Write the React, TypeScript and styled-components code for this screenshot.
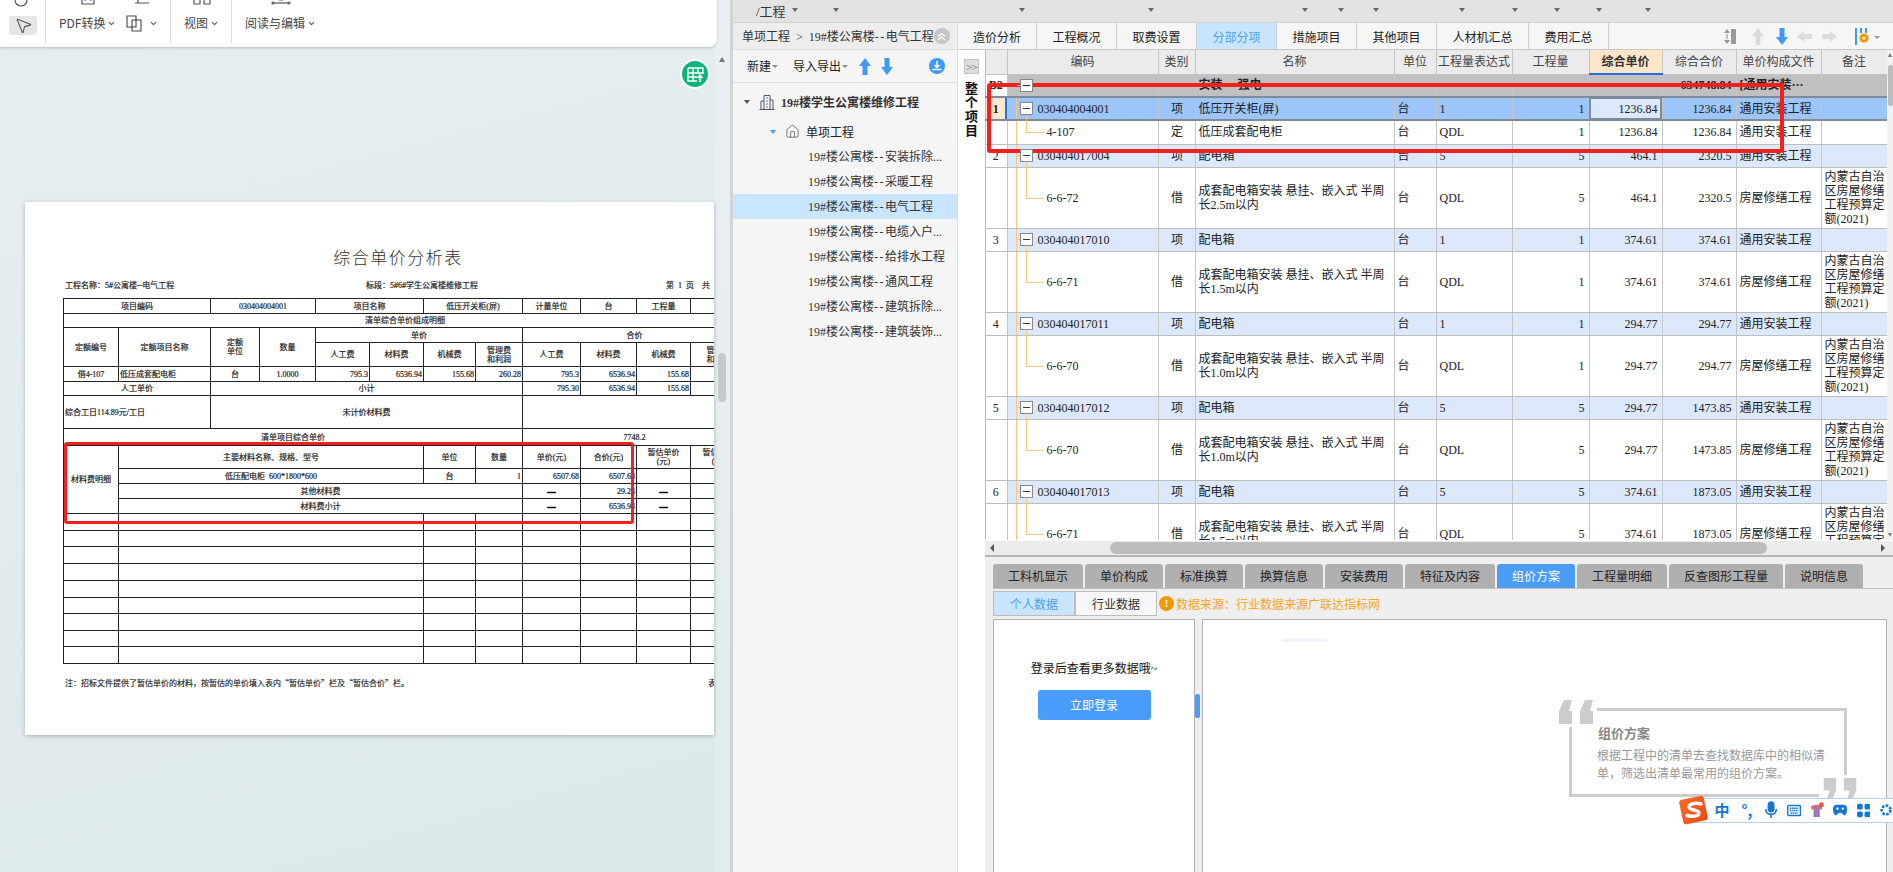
import React from "react";
import styled, { createGlobalStyle } from "styled-components";
import { MousePointer2, ChevronDown, House } from "lucide-react";

const SERIF = `"Liberation Serif", "Noto Sans CJK SC", serif`;
const SANS = `"Noto Sans CJK SC", "Liberation Sans", sans-serif`;

const Global = createGlobalStyle`
  html, body { margin: 0; padding: 0; height: 100%; overflow: hidden; background: #fff; }
  #root { height: 100%; }
  * { box-sizing: border-box; }
`;

const Screen = styled.div`
  display: flex;
  width: 1893px;
  height: 872px;
  overflow: hidden;
  position: relative;
  font-family: ${SERIF};
  font-size: 12px;
  color: #222;
`;

/* ---------- left: pdf viewer ---------- */
const Viewer = styled.section`
  width: 730px;
  flex: none;
  display: flex;
  position: relative;
  background: linear-gradient(165deg, #e7eef2 0%, #e2ebee 50%, #dde9e9 100%);
`;
const ViewerMain = styled.div`
  width: 715px;
  flex: none;
  display: flex;
  flex-direction: column;
`;
const Ribbon = styled.div`
  width: 717px;
  height: 47px;
  flex: none;
  display: flex;
  background: #fff;
  border-radius: 0 0 8px 0;
  box-shadow: 0 1px 3px rgba(0, 0, 0, 0.22);
  font-family: ${SANS};
  color: #444;
  padding-left: 9px;
`;
const RibbonGroup = styled.div<{ $w: number; $pad: number; $end?: boolean }>`
  width: ${(p) => p.$w}px;
  height: 43px;
  flex: none;
  display: flex;
  gap: 10px;
  padding-left: ${(p) => p.$pad}px;
  border-right: ${(p) => (p.$end ? "none" : "1px solid #dcdcdc")};
`;
const RibbonTool = styled.div`
  height: 43px;
  display: flex;
  flex-direction: column;
  justify-content: flex-end;
  align-items: center;
  padding-bottom: 8px;
`;
const TopIcon = styled.svg`
  flex: none;
  width: 20px;
  height: 20px;
  margin-bottom: 6px;
  fill: none;
  stroke: #555;
  stroke-width: 1.2;
`;
const ToolLabel = styled.div`
  height: 24px;
  display: flex;
  align-items: center;
  gap: 2px;
  white-space: nowrap;
  line-height: 24px;
`;
const CursorBtn = styled.div`
  width: 28px;
  height: 24px;
  display: flex;
  align-items: center;
  justify-content: center;
  background: #e6e6e6;
  border-radius: 3px;
  color: #555;
`;
const ViewerBody = styled.div`
  flex: 1;
  padding: 155px 0 0 25px;
`;
const Page = styled.article`
  position: relative;
  width: 689px;
  height: 533px;
  background: #fff;
  overflow: hidden;
  box-shadow: 0 1px 4px rgba(0, 0, 0, 0.25);
  padding: 42px 0 0 38px;
  color: #222;
`;
const PageTitle = styled.h1`
  width: 670px;
  margin: 0;
  text-align: center;
  font-family: ${SANS};
  font-size: 17px;
  line-height: 26px;
  font-weight: 300;
  letter-spacing: 1.5px;
  color: #333;
`;
const PageInfo = styled.div`
  display: grid;
  grid-template-columns: 301px 300px 120px;
  width: 720px;
  margin-top: 10px;
  padding-left: 2px;
  height: 18px;
  font-size: 8px;
  line-height: 12px;
  -webkit-text-stroke: 0.2px #222;
  white-space: nowrap;
`;
const PdfTable = styled.table`
  border-collapse: collapse;
  table-layout: fixed;
  width: 683px;
  font-size: 8px;
  line-height: 9px;
  -webkit-text-stroke: 0.2px #222;
`;
const PdfRow = styled.tr<{ $h: number }>`
  height: ${(p) => p.$h}px;
`;
const PdfCell = styled.td<{ $a?: string }>`
  border: 1px solid #222;
  padding: 0 1px;
  text-align: ${(p) => p.$a ?? "center"};
  overflow: hidden;
  white-space: nowrap;
`;
const PdfBreak = styled(PdfCell)`
  white-space: normal;
`;
const PdfDash = styled.b`
  -webkit-text-stroke: 0.8px #111;
`;
const PageNote = styled.div`
  display: flex;
  justify-content: space-between;
  width: 683px;
  margin-top: 13px;
  padding: 0 18px 0 2px;
  font-family: ${SANS};
  font-size: 8px;
  line-height: 12px;
  -webkit-text-stroke: 0.15px #222;
  white-space: nowrap;
`;
const PageMark = styled.div`
  position: absolute;
  left: 39px;
  top: 240px;
  width: 570px;
  height: 82px;
  border: 3px solid #f5201c;
  border-radius: 3px;
  pointer-events: none;
`;
const FloatBadge = styled.div`
  position: absolute;
  left: 680px;
  top: 59px;
  width: 30px;
  height: 30px;
  border-radius: 50%;
  background: #10b47a;
  border: 2px solid #fff;
  display: flex;
  align-items: center;
  justify-content: center;
`;
const ViewerTrack = styled.div`
  width: 15px;
  flex: none;
  padding: 57px 0 0 3px;
  background: rgba(255, 255, 255, 0.18);
`;
const TrackArrow = styled.div`
  width: 0;
  height: 0;
  margin-left: 1px;
  border-left: 3px solid transparent;
  border-right: 3px solid transparent;
  border-bottom: 5px solid #777;
`;
const TrackThumb = styled.div`
  width: 8px;
  height: 49px;
  margin-top: 291px;
  background: #c4c9cb;
  border-radius: 4px;
`;

/* ---------- right: estimating app ---------- */
const AppWindow = styled.section`
  flex: 1;
  min-width: 0;
  display: flex;
  flex-direction: column;
  border-left: 3px solid #d4d4d4;
  background: #fff;
`;
const MenuBar = styled.div`
  height: 23px;
  flex: none;
  display: flex;
  background: #e3e3e3;
  border-bottom: 1px solid #d2d2d2;
`;
const MenuSlot = styled.div<{ $w: number }>`
  width: ${(p) => p.$w}px;
  flex: none;
  height: 22px;
  display: flex;
  align-items: center;
  justify-content: space-between;
  padding-bottom: 2px;
`;
const MenuText = styled.span`
  padding-left: 23px;
  font-size: 13px;
  color: #333;
`;
const MenuCaret = styled.i`
  margin-left: auto;
  margin-right: 3px;
  width: 0;
  height: 0;
  border-left: 3px solid transparent;
  border-right: 3px solid transparent;
  border-top: 4px solid #666;
`;
const AppBody = styled.div`
  flex: 1;
  min-height: 0;
  display: flex;
`;
const SideCol = styled.aside`
  width: 225px;
  flex: none;
  display: flex;
  flex-direction: column;
  background: #f5f5f5;
  border-right: 1px solid #ddd;
`;
const Crumb = styled.div`
  height: 27px;
  flex: none;
  display: flex;
  align-items: center;
  padding-left: 9px;
  gap: 5px;
  background: #ededed;
  color: #333;
  white-space: nowrap;
  border-bottom: 1px solid #e0e0e0;
`;
const CrumbFold = styled.span`
  width: 16px;
  height: 16px;
  flex: none;
  border-radius: 50%;
  background: #c6c6c6;
  color: #fff;
  display: flex;
  align-items: center;
  justify-content: center;
  margin-left: -5px;
`;
const Dash = styled.span`
  letter-spacing: 1.5px;
`;
const SideTools = styled.div`
  height: 33px;
  flex: none;
  display: flex;
  align-items: center;
  padding-left: 14px;
  border-bottom: 1px solid #dedede;
  color: #222;
`;
const SideTool = styled.span<{ $w: number }>`
  width: ${(p) => p.$w}px;
  flex: none;
  display: flex;
  align-items: center;
  gap: 1px;
  white-space: nowrap;
`;
const SmallCaret = styled.i`
  width: 0;
  height: 0;
  border-left: 3px solid transparent;
  border-right: 3px solid transparent;
  border-top: 3px solid #888;
`;
const RoundDown = styled.span`
  width: 16px;
  height: 16px;
  margin-left: 36px;
  border-radius: 50%;
  background: #3d9bf5;
  display: flex;
  align-items: center;
  justify-content: center;
`;
const Tree = styled.div`
  padding-top: 6px;
`;
const TreeHead = styled.div<{ $pad: number; $after: number }>`
  height: 25px;
  display: flex;
  align-items: center;
  padding-left: ${(p) => p.$pad}px;
  margin-bottom: ${(p) => p.$after}px;
  white-space: nowrap;
`;
const TreeCaret = styled.i<{ $c: string; $mr: number }>`
  flex: none;
  width: 0;
  height: 0;
  margin-right: ${(p) => p.$mr}px;
  border-left: 3.5px solid transparent;
  border-right: 3.5px solid transparent;
  border-top: 4px solid ${(p) => p.$c};
`;
const TreeRoot = styled.b`
  font-weight: 700;
  color: #333;
`;
const TreeItem = styled.div<{ $on?: boolean }>`
  height: 25px;
  line-height: 26px;
  padding-left: 75px;
  white-space: nowrap;
  color: #333;
  background: ${(p) => (p.$on ? "#c9e5ff" : "transparent")};
`;
const MainCol = styled.div`
  flex: 1;
  min-width: 0;
  display: flex;
  flex-direction: column;
`;
const TopTabs = styled.nav`
  height: 27px;
  flex: none;
  display: flex;
  background: #f6f6f6;
  border-bottom: 1px solid #c8c8c8;
`;
const TopTab = styled.div<{ $w: number; $on?: boolean }>`
  width: ${(p) => p.$w}px;
  flex: none;
  display: flex;
  align-items: center;
  justify-content: center;
  padding-top: 2px;
  border-right: 1px solid #cfcfcf;
  background: ${(p) => (p.$on ? "#c9e5fd" : "transparent")};
  color: ${(p) => (p.$on ? "#4da2ef" : "#222")};
  white-space: nowrap;
`;
const TabTools = styled.div`
  margin-left: 115px;
  display: flex;
  align-items: center;
`;
const ToolSlot = styled.span<{ $w: number }>`
  width: ${(p) => p.$w}px;
  flex: none;
  display: flex;
  align-items: center;
`;
const MainBody = styled.div`
  flex: 1;
  min-height: 0;
  display: flex;
`;
const Strip = styled.div`
  width: 27px;
  flex: none;
  display: flex;
  flex-direction: column;
  align-items: center;
  padding-top: 9px;
`;
const StripBtn = styled.div`
  width: 15px;
  height: 15px;
  background: #dedede;
  border: 1px solid #c4c4c4;
  color: #666;
  display: flex;
  align-items: center;
  justify-content: center;
  font-size: 11px;
  letter-spacing: -1px;
  line-height: 12px;
`;
const StripText = styled.div`
  margin-top: 7px;
  width: 14px;
  font-size: 13px;
  line-height: 14px;
  font-weight: 700;
  font-family: ${SANS};
  color: #111;
  text-align: center;
`;
const Content = styled.div`
  flex: 1;
  min-width: 0;
  display: flex;
  flex-direction: column;
`;
const GridFrame = styled.div`
  height: 490px;
  flex: none;
  display: flex;
  position: relative;
`;
const GridClip = styled.div`
  width: 902px;
  height: 490px;
  flex: none;
  overflow: hidden;
`;
const Sheet = styled.table`
  border-collapse: collapse;
  table-layout: fixed;
  width: 902px;
  line-height: 14px;
  & tr > :first-child {
    box-shadow: inset 1px 0 0 #bbb;
  }
`;
const SheetHeadRow = styled.tr`
  height: 24px;
  background: #ebebeb;
`;
const SheetHead = styled.th<{ $on?: boolean }>`
  padding: 0;
  font-weight: ${(p) => (p.$on ? 700 : 400)};
  color: ${(p) => (p.$on ? "#333" : "#444")};
  background: ${(p) => (p.$on ? "#fde5c8" : "transparent")};
  border-right: 1px solid #c4c4c4;
  border-bottom: ${(p) => (p.$on ? "2px solid #1f6fe0" : "1px solid #c4c4c4")};
  white-space: nowrap;
`;
type Tone = "group" | "picked" | "parent" | "child";
const rowBg: Record<Tone, string> = {
  group: "#c0c0c0",
  picked: "#9cc6fb",
  parent: "#dce9fc",
  child: "#fff",
};
const SheetRow = styled.tr<{ $tone: Tone; $h: number }>`
  height: ${(p) => p.$h}px;
  background: ${(p) => rowBg[p.$tone]};
  font-weight: ${(p) => (p.$tone === "group" ? 700 : 400)};
  & > td {
    border-top: ${(p) => (p.$tone === "picked" ? "2px solid #808b99" : "1px solid #bdbdbd")};
    border-bottom: ${(p) => (p.$tone === "picked" ? "2px solid #808b99" : "1px solid #bdbdbd")};
  }
`;
const Cell = styled.td<{ $a?: string; $pick?: boolean }>`
  padding: ${(p) => (p.$a === "right" ? "0 4px 0 0" : "0 2px 0 3px")};
  text-align: ${(p) => p.$a ?? "left"};
  border-right: 1px solid #c6c6c6;
  background: ${(p) => (p.$pick ? "#dce9fc" : "transparent")};
  outline: ${(p) => (p.$pick ? "2px solid #808b99" : "none")};
  outline-offset: -2px;
  overflow: hidden;
`;
const NumCell = styled.td<{ $picked?: boolean }>`
  padding: 0;
  text-align: center;
  border-right: 1px solid #c6c6c6;
  background: ${(p) => (p.$picked ? "#fde8cf" : "#fff")};
  font-weight: ${(p) => (p.$picked ? 700 : "inherit")};
  tr > &:first-child {
    box-shadow: ${(p) => (p.$picked ? "inset 1px 0 0 #bbb, inset -2px 0 0 #1f6fe0" : "inset 1px 0 0 #bbb")};
  }
`;
const CodeCell = styled.td<{ $line?: boolean; $child?: boolean }>`
  position: relative;
  padding: 0;
  border-right: 1px solid #c6c6c6;
  white-space: nowrap;
  &::before {
    content: "";
    display: ${(p) => (p.$line ? "block" : "none")};
    position: absolute;
    left: 8px;
    top: 0;
    bottom: 0;
    width: 1px;
    background: #fbc77a;
  }
  &::after {
    content: "";
    display: ${(p) => (p.$child ? "block" : "none")};
    position: absolute;
    left: 18px;
    top: -5px;
    width: 17px;
    height: calc(50% + 5px);
    border-left: 1px solid #fbc77a;
    border-bottom: 1px solid #fbc77a;
  }
`;
const CodeParent = styled.div`
  display: flex;
  align-items: center;
  padding-left: 12px;
  gap: 5px;
`;
const FoldBox = styled.span`
  position: relative;
  z-index: 1;
  width: 13px;
  height: 13px;
  flex: none;
  background: #fff;
  border: 1px solid #888;
  display: flex;
  align-items: center;
  justify-content: center;
  &::after {
    content: "";
    width: 7px;
    height: 1px;
    background: #333;
  }
  &::before {
    content: "";
    position: absolute;
    left: -4px;
    top: 5px;
    width: 3px;
    height: 1px;
    background: #fbc77a;
  }
`;
const CodeChild = styled.div`
  padding-left: 39px;
`;
const Mark = styled.div`
  position: absolute;
  left: 2px;
  top: 33px;
  width: 797px;
  height: 70px;
  border: 4px solid #f5201c;
  border-radius: 3px;
  pointer-events: none;
`;
const VScroll = styled.div`
  width: 6px;
  flex: none;
  background: #f1f1f1;
  padding: 3px 0 3px 1px;
  display: flex;
  flex-direction: column;
`;
const VArrow = styled.i<{ $down?: boolean }>`
  flex: none;
  width: 0;
  height: 0;
  border-left: 2.5px solid transparent;
  border-right: 2.5px solid transparent;
  ${(p) => (p.$down ? "border-top: 4px solid #777; margin-top: auto;" : "border-bottom: 4px solid #777;")}
`;
const VThumb = styled.div`
  width: 5px;
  height: 41px;
  margin-top: 8px;
  background: #bdbdbd;
  border-radius: 3px;
`;
const HScroll = styled.div`
  height: 16px;
  flex: none;
  margin-top: 1px;
  display: flex;
  align-items: center;
  padding: 0 8px 0 5px;
  background: #ececec;
  border-bottom: 2px solid #b6b6b6;
`;
const HArrow = styled.i<{ $left?: boolean }>`
  flex: none;
  width: 0;
  height: 0;
  border-top: 4px solid transparent;
  border-bottom: 4px solid transparent;
  ${(p) => (p.$left ? "border-right: 4px solid #555;" : "border-left: 4px solid #555;")}
`;
const HTrack = styled.div`
  flex: 1;
  padding-left: 116px;
  padding-right: 114px;
`;
const HThumb = styled.div`
  height: 12px;
  background: #bdbdbd;
  border-radius: 6px;
`;
const Lower = styled.div`
  flex: 1;
  min-height: 0;
  display: flex;
  flex-direction: column;
  padding: 7px 6px 0 8px;
  background: #efefef;
`;
const LowerTabs = styled.div`
  display: flex;
  gap: 2px;
  height: 25px;
  flex: none;
  margin-right: -6px;
  border-bottom: 1px solid #bdbdbd;
`;
const LowerTab = styled.div<{ $w: number; $on?: boolean }>`
  width: ${(p) => p.$w}px;
  height: 24px;
  flex: none;
  display: flex;
  align-items: center;
  justify-content: center;
  border-radius: 3px 3px 0 0;
  background: ${(p) => (p.$on ? "#4a9cf5" : "#b0b0b0")};
  color: ${(p) => (p.$on ? "#fff" : "#222")};
  white-space: nowrap;
`;
const SubRow = styled.div`
  height: 25px;
  margin-top: 2px;
  flex: none;
  display: flex;
  align-items: center;
`;
const SubTab = styled.div<{ $on?: boolean }>`
  width: 82px;
  height: 25px;
  flex: none;
  display: flex;
  align-items: center;
  justify-content: center;
  border: 1px solid #bcbcbc;
  background: ${(p) => (p.$on ? "#c9e5fd" : "#f7f7f7")};
  color: ${(p) => (p.$on ? "#4da2ef" : "#333")};
`;
const WarnDot = styled.span`
  width: 15px;
  height: 15px;
  margin-left: 2px;
  flex: none;
  border-radius: 50%;
  background: #f39800;
  color: #fff;
  display: flex;
  align-items: center;
  justify-content: center;
  font-weight: 700;
  font-size: 11px;
  line-height: 15px;
`;
const WarnText = styled.span`
  margin-left: 2px;
  color: #f5a623;
  white-space: nowrap;
`;
const PanelRow = styled.div`
  flex: 1;
  min-height: 0;
  margin-top: 3px;
  display: flex;
`;
const LoginPanel = styled.div`
  width: 202px;
  flex: none;
  background: #fff;
  border: 1px solid #b0b0b0;
  border-bottom: none;
  display: flex;
  flex-direction: column;
  align-items: center;
  padding-top: 42px;
`;
const LoginText = styled.div`
  line-height: 14px;
  color: #111;
  white-space: nowrap;
`;
const LoginBtn = styled.div`
  width: 113px;
  height: 30px;
  margin-top: 14px;
  border-radius: 3px;
  background: #4a9cfa;
  color: #fff;
  display: flex;
  align-items: center;
  justify-content: center;
`;
const Splitter = styled.div`
  width: 7px;
  flex: none;
  padding-top: 75px;
`;
const SplitHandle = styled.div`
  width: 5px;
  height: 24px;
  background: #4a9cfa;
  border-radius: 2px;
`;
const PlanPanel = styled.div`
  flex: 1;
  min-width: 0;
  position: relative;
  background: #fff;
  border: 1px solid #b0b0b0;
  border-bottom: none;
  display: flex;
  justify-content: flex-end;
  padding: 88px 39px 0 0;
  &::before {
    content: "";
    position: absolute;
    left: 79px;
    top: 18px;
    width: 45px;
    height: 4px;
    border-radius: 50% 50% 0 0;
    background: #edf3fb;
  }
`;
const QuoteBox = styled.div`
  position: relative;
  width: 278px;
  height: 89px;
  border: 3px solid #ccc;
  padding: 15px 14px 0 26px;
`;
const QuoteOpen = styled.svg`
  position: absolute;
  left: -13px;
  top: -11px;
  width: 38px;
  height: 27px;
  padding: 0 4px 3px 0;
  background: #fff;
  fill: #ccc;
`;
const QuoteClose = styled.svg`
  position: absolute;
  right: -13px;
  bottom: -7px;
  width: 38px;
  height: 26px;
  padding: 3px 0 0 4px;
  background: #fff;
  fill: #ccc;
`;
const QuoteTitle = styled.div`
  font-size: 13px;
  line-height: 16px;
  font-weight: 700;
  color: #888;
  margin-bottom: 5px;
`;
const QuoteBody = styled.div`
  margin-left: -1px;
  line-height: 18px;
  color: #999;
`;
const Ime = styled.div`
  position: absolute;
  left: 1678px;
  top: 795px;
  width: 215px;
  height: 30px;
  display: flex;
  align-items: center;
`;
const ImeBar = styled.div`
  position: absolute;
  left: 12px;
  right: 0;
  top: 3px;
  height: 25px;
  background: #fff;
  border-top: 1px solid #b9d0ea;
  border-bottom: 1px solid #b9d0ea;
`;
const ImeLogo = styled.svg`
  position: relative;
  width: 32px;
  height: 30px;
  flex: none;
`;
const ImeItems = styled.div`
  position: relative;
  display: flex;
  align-items: center;
  gap: 9px;
  padding-left: 4px;
  color: #1677d2;
  overflow: hidden;
  width: 183px;
`;
const ImeGlyph = styled.span`
  font-family: ${SANS};
  font-size: 15px;
  font-weight: 700;
  line-height: 20px;
  width: 16px;
  flex: none;
  text-align: center;
  white-space: nowrap;
`;

/* ---------- drawings ---------- */
const BlockArrow = ({ dir, color, w = 12, h = 17 }: { dir: number; color: string; w?: number; h?: number }) => (
  <svg width={dir % 180 ? h : w} height={dir % 180 ? w : h} viewBox="0 0 12 17">
    <polygon
      points="6,0 12,8 8.5,8 8.5,17 3.5,17 3.5,8 0,8"
      fill={color}
      transform={`rotate(${dir} 6 8.5)`}
    />
  </svg>
);
const HArrowIcon = ({ left, color }: { left?: boolean; color: string }) => (
  <svg width="15" height="11" viewBox="0 0 15 11">
    <polygon points={left ? "0,5.5 7,0 7,3 15,3 15,8 7,8 7,11" : "15,5.5 8,0 8,3 0,3 0,8 8,8 8,11"} fill={color} />
  </svg>
);

const Building = () => (
  <svg width="16" height="16" viewBox="0 0 16 16" fill="none" stroke="#555" strokeWidth="1">
    <path d="M.5 15.5h15M2 15.5V7h3M5 15.5V1.5h6v14M11 6h3v9.5" />
    <path d="M7 4h2M7 7h2M7 10h2M7 13h2" stroke="#3d86d6" />
  </svg>
);

const groupCols = [22, 151, 37, 199, 42, 76, 77, 73, 74, 85, 66];
const heads = ["", "编码", "类别", "名称", "单位", "工程量表达式", "工程量", "综合单价", "综合合价", "单价构成文件", "备注"];
const note = "内蒙古自治区房屋修缮工程预算定额(2021)";
const setName = (s: string) => `成套配电箱安装 悬挂、嵌入式 半周长${s}m以内`;

type Item = {
  n: string; code: string; name: string; expr: string; qty: string; price: string; total: string;
  sub: string; size: string;
};
const items: Item[] = [
  { n: "2", code: "030404017004", name: "配电箱", expr: "5", qty: "5", price: "464.1", total: "2320.5", sub: "6-6-72", size: "2.5" },
  { n: "3", code: "030404017010", name: "配电箱", expr: "1", qty: "1", price: "374.61", total: "374.61", sub: "6-6-71", size: "1.5" },
  { n: "4", code: "030404017011", name: "配电箱", expr: "1", qty: "1", price: "294.77", total: "294.77", sub: "6-6-70", size: "1.0" },
  { n: "5", code: "030404017012", name: "配电箱", expr: "5", qty: "5", price: "294.77", total: "1473.85", sub: "6-6-70", size: "1.0" },
  { n: "6", code: "030404017013", name: "配电箱", expr: "5", qty: "5", price: "374.61", total: "1873.05", sub: "6-6-71", size: "1.5" },
];

const pdfCols = [55, 92, 49, 56, 54, 54, 52, 47, 58, 56, 54, 56];
const emptyRows = [17, 16, 17, 17, 17, 16, 17, 16, 17];
const menuSlots = [41, 186, 129, 154, 36, 35, 86, 53, 42, 42, 49];
const treeItems = ["安装拆除...", "采暖工程", "电气工程", "电缆入户...", "给排水工程", "通风工程", "建筑拆除...", "建筑装饰..."];

const Caret = () => <ChevronDown size={9} strokeWidth={3} color="#555" />;

export default function App() {
  return (
    <Screen>
      <Global />
      <Viewer>
        <ViewerMain>
          <Ribbon>
            <RibbonGroup $w={37} $pad={0}>
              <RibbonTool>
                <TopIcon viewBox="0 0 20 20"><circle cx="8" cy="10" r="6" /></TopIcon>
                <CursorBtn><MousePointer2 size={19} strokeWidth={1.4} /></CursorBtn>
              </RibbonTool>
            </RibbonGroup>
            <RibbonGroup $w={125} $pad={13}>
              <RibbonTool>
                <TopIcon viewBox="0 0 20 20">
                  <path d="M4 1h12v18H4z" />
                  <path d="M7 16l1.5-5 1.5 3 1.5-3 1.5 5" stroke="#2f6fe0" />
                </TopIcon>
                <ToolLabel>PDF转换<Caret /></ToolLabel>
              </RibbonTool>
              <RibbonTool>
                <TopIcon viewBox="0 0 20 20"><path d="M3 18h14M6 10v8" /></TopIcon>
                <ToolLabel>
                  <svg width="16" height="17" viewBox="0 0 16 17" fill="none" stroke="#444" strokeWidth="1.1">
                    <path d="M1 1h9v4h5v11H6v-4H1z" /><path d="M6 5h4v7H6z" />
                  </svg>
                  &nbsp;<Caret />
                </ToolLabel>
              </RibbonTool>
            </RibbonGroup>
            <RibbonGroup $w={61} $pad={13}>
              <RibbonTool>
                <TopIcon viewBox="0 0 20 20"><path d="M2 4h6v15H2zM12 4h6v15h-6z" /></TopIcon>
                <ToolLabel>视图<Caret /></ToolLabel>
              </RibbonTool>
            </RibbonGroup>
            <RibbonGroup $w={200} $pad={13} $end>
              <RibbonTool>
                <TopIcon viewBox="0 0 20 20">
                  <path d="M3 18h14" />
                  <circle cx="2" cy="18" r="1" /><circle cx="18" cy="18" r="1" />
                  <path d="M8 15h4" stroke="#2f6fe0" />
                </TopIcon>
                <ToolLabel>阅读与编辑<Caret /></ToolLabel>
              </RibbonTool>
            </RibbonGroup>
          </Ribbon>
          <ViewerBody>
            <Page>
              <PageTitle>综合单价分析表</PageTitle>
              <PageInfo>
                <span>工程名称：5#公寓楼--电气工程</span>
                <span>标段：5#6#学生公寓楼维修工程</span>
                <span>第&nbsp;&nbsp;1&nbsp;&nbsp;页&nbsp;&nbsp;&nbsp;&nbsp;共&nbsp;&nbsp;1&nbsp;&nbsp;页</span>
              </PageInfo>
              <PdfTable>
                <colgroup>{pdfCols.map((w, i) => <col key={i} width={w} />)}</colgroup>
                <tbody>
                  <PdfRow $h={15}>
                    <PdfCell colSpan={2}>项目编码</PdfCell>
                    <PdfCell colSpan={2}>030404004001</PdfCell>
                    <PdfCell colSpan={2}>项目名称</PdfCell>
                    <PdfCell colSpan={2}>低压开关柜(屏)</PdfCell>
                    <PdfCell>计量单位</PdfCell>
                    <PdfCell>台</PdfCell>
                    <PdfCell>工程量</PdfCell>
                    <PdfCell>1</PdfCell>
                  </PdfRow>
                  <PdfRow $h={14}><PdfCell colSpan={12}>清单综合单价组成明细</PdfCell></PdfRow>
                  <PdfRow $h={15}>
                    <PdfCell rowSpan={2}>定额编号</PdfCell>
                    <PdfCell rowSpan={2}>定额项目名称</PdfCell>
                    <PdfBreak rowSpan={2}>定额<br />单位</PdfBreak>
                    <PdfCell rowSpan={2}>数量</PdfCell>
                    <PdfCell colSpan={4}>单价</PdfCell>
                    <PdfCell colSpan={4}>合价</PdfCell>
                  </PdfRow>
                  <PdfRow $h={24}>
                    <PdfCell>人工费</PdfCell><PdfCell>材料费</PdfCell><PdfCell>机械费</PdfCell>
                    <PdfBreak>管理费<br />和利润</PdfBreak>
                    <PdfCell>人工费</PdfCell><PdfCell>材料费</PdfCell><PdfCell>机械费</PdfCell>
                    <PdfBreak>管理费<br />和利润</PdfBreak>
                  </PdfRow>
                  <PdfRow $h={15}>
                    <PdfCell>借4-107</PdfCell>
                    <PdfCell $a="left">低压成套配电柜</PdfCell>
                    <PdfCell>台</PdfCell>
                    <PdfCell>1.0000</PdfCell>
                    <PdfCell $a="right">795.3</PdfCell>
                    <PdfCell $a="right">6536.94</PdfCell>
                    <PdfCell $a="right">155.68</PdfCell>
                    <PdfCell $a="right">260.28</PdfCell>
                    <PdfCell $a="right">795.3</PdfCell>
                    <PdfCell $a="right">6536.94</PdfCell>
                    <PdfCell $a="right">155.68</PdfCell>
                    <PdfCell $a="right">260.28</PdfCell>
                  </PdfRow>
                  <PdfRow $h={14}>
                    <PdfCell colSpan={2}>人工单价</PdfCell>
                    <PdfCell colSpan={6}>小计</PdfCell>
                    <PdfCell $a="right">795.30</PdfCell>
                    <PdfCell $a="right">6536.94</PdfCell>
                    <PdfCell $a="right">155.68</PdfCell>
                    <PdfCell $a="right">260.28</PdfCell>
                  </PdfRow>
                  <PdfRow $h={33}>
                    <PdfCell colSpan={2} $a="left">综合工日114.89元/工日</PdfCell>
                    <PdfCell colSpan={6}>未计价材料费</PdfCell>
                    <PdfCell colSpan={4} $a="right">6507.68</PdfCell>
                  </PdfRow>
                  <PdfRow $h={17}>
                    <PdfCell colSpan={8}>清单项目综合单价</PdfCell>
                    <PdfCell colSpan={4}>7748.2</PdfCell>
                  </PdfRow>
                  <PdfRow $h={23}>
                    <PdfCell rowSpan={4}>材料费明细</PdfCell>
                    <PdfCell colSpan={5}>主要材料名称、规格、型号</PdfCell>
                    <PdfCell>单位</PdfCell>
                    <PdfCell>数量</PdfCell>
                    <PdfCell>单价(元)</PdfCell>
                    <PdfCell>合价(元)</PdfCell>
                    <PdfBreak>暂估单价<br />(元)</PdfBreak>
                    <PdfBreak>暂估合价<br />(元)</PdfBreak>
                  </PdfRow>
                  <PdfRow $h={15}>
                    <PdfCell colSpan={5}>低压配电柜&nbsp;&nbsp;600*1800*600</PdfCell>
                    <PdfCell>台</PdfCell>
                    <PdfCell $a="right">1</PdfCell>
                    <PdfCell $a="right">6507.68</PdfCell>
                    <PdfCell $a="right">6507.68</PdfCell>
                    <PdfCell /><PdfCell />
                  </PdfRow>
                  <PdfRow $h={15}>
                    <PdfCell colSpan={7}>其他材料费</PdfCell>
                    <PdfCell><PdfDash>—</PdfDash></PdfCell>
                    <PdfCell $a="right">29.24</PdfCell>
                    <PdfCell><PdfDash>—</PdfDash></PdfCell>
                    <PdfCell />
                  </PdfRow>
                  <PdfRow $h={15}>
                    <PdfCell colSpan={7}>材料费小计</PdfCell>
                    <PdfCell><PdfDash>—</PdfDash></PdfCell>
                    <PdfCell $a="right">6536.94</PdfCell>
                    <PdfCell><PdfDash>—</PdfDash></PdfCell>
                    <PdfCell />
                  </PdfRow>
                  {emptyRows.map((h, i) => (
                    <PdfRow $h={h} key={i}>
                      <PdfCell /><PdfCell colSpan={5} /><PdfCell /><PdfCell /><PdfCell /><PdfCell /><PdfCell /><PdfCell />
                    </PdfRow>
                  ))}
                </tbody>
              </PdfTable>
              <PageNote>
                <span>注：招标文件提供了暂估单价的材料，按暂估的单价填入表内“暂估单价”栏及“暂估合价”栏。</span>
                <span>表-08</span>
              </PageNote>
              <PageMark />
            </Page>
          </ViewerBody>
        </ViewerMain>
        <ViewerTrack>
          <TrackArrow />
          <TrackThumb />
        </ViewerTrack>
        <FloatBadge>
          <svg width="17" height="17" viewBox="0 0 17 17" fill="none" stroke="#fff" strokeWidth="1.3">
            <path d="M1 2h15v6M1 2v13h9M1 7h15M1 11h9M6 2v13M11 2v5" />
            <path d="M13 16v-6M10.5 12l2.5-3 2.5 3" strokeWidth="1.6" />
          </svg>
        </FloatBadge>
      </Viewer>

      <AppWindow>
        <MenuBar>
          <MenuSlot $w={68}><MenuText>/工程</MenuText><MenuCaret /></MenuSlot>
          {menuSlots.map((w, i) => <MenuSlot $w={w} key={i}><MenuCaret /></MenuSlot>)}
        </MenuBar>
        <AppBody>
          <SideCol>
            <Crumb>
              <span>单项工程&nbsp;&nbsp;&gt;&nbsp;&nbsp;19#楼公寓楼<Dash>--</Dash>电气工程</span>
              <CrumbFold>
                <svg width="9" height="9" viewBox="0 0 9 9" fill="none" stroke="#fff" strokeWidth="1.3">
                  <path d="M1 4.5l3.5-3 3.5 3M1 8l3.5-3 3.5 3" />
                </svg>
              </CrumbFold>
            </Crumb>
            <SideTools>
              <SideTool $w={46}>新建<SmallCaret /></SideTool>
              <SideTool $w={66}>导入导出<SmallCaret /></SideTool>
              <SideTool $w={22}><BlockArrow dir={0} color="#3d9bf5" /></SideTool>
              <SideTool $w={12}><BlockArrow dir={180} color="#3d9bf5" /></SideTool>
              <RoundDown>
                <svg width="10" height="10" viewBox="0 0 10 10" fill="none" stroke="#fff" strokeWidth="1.4">
                  <path d="M5 0v6M2.5 4L5 6.5 7.5 4M0.5 8.5h9" />
                </svg>
              </RoundDown>
            </SideTools>
            <Tree>
              <TreeHead $pad={11} $after={5}>
                <TreeCaret $c="#555" $mr={9} />
                <Building />
                <TreeRoot>&nbsp;&nbsp;19#楼学生公寓楼维修工程</TreeRoot>
              </TreeHead>
              <TreeHead $pad={37} $after={0}>
                <TreeCaret $c="#3d9bf5" $mr={9} />
                <House size={15} strokeWidth={1.2} color="#555" />
                <span>&nbsp;&nbsp;单项工程</span>
              </TreeHead>
              {treeItems.map((t, i) => (
                <TreeItem key={t} $on={i === 2}>19#楼公寓楼<Dash>--</Dash>{t}</TreeItem>
              ))}
            </Tree>
          </SideCol>
          <MainCol>
            <TopTabs>
              <TopTab $w={79}>造价分析</TopTab>
              <TopTab $w={80}>工程概况</TopTab>
              <TopTab $w={80}>取费设置</TopTab>
              <TopTab $w={80} $on>分部分项</TopTab>
              <TopTab $w={80}>措施项目</TopTab>
              <TopTab $w={80}>其他项目</TopTab>
              <TopTab $w={92}>人材机汇总</TopTab>
              <TopTab $w={80}>费用汇总</TopTab>
              <TabTools>
                <ToolSlot $w={28}>
                  <svg width="12" height="15" viewBox="0 0 12 15">
                    <polygon points="3,0 6,4 0,4" fill="#999" />
                    <polygon points="3,15 6,11 0,11" fill="#999" />
                    <rect x="2.4" y="5" width="1.2" height="5" fill="#999" />
                    <rect x="7" y="0" width="5" height="15" fill="#9a9a9a" />
                  </svg>
                </ToolSlot>
                <ToolSlot $w={24}><BlockArrow dir={0} color="#dcdcdc" /></ToolSlot>
                <ToolSlot $w={21}><BlockArrow dir={180} color="#3d9bf5" /></ToolSlot>
                <ToolSlot $w={25}><HArrowIcon left color="#dcdcdc" /></ToolSlot>
                <ToolSlot $w={33}><HArrowIcon color="#dcdcdc" /></ToolSlot>
                <ToolSlot $w={27}>
                  <svg width="27" height="17" viewBox="0 0 27 17">
                    <rect x="0" y="0" width="2" height="17" fill="#3d9bf5" />
                    <rect x="5" y="0" width="2" height="5" fill="#3d9bf5" />
                    <rect x="10" y="0" width="2" height="5" fill="#3d9bf5" />
                    <circle cx="9" cy="10" r="4.5" fill="#f39800" />
                    <circle cx="9" cy="10" r="1.5" fill="#fff" />
                    <polygon points="19,8 25,8 22,11" fill="#999" />
                  </svg>
                </ToolSlot>
              </TabTools>
            </TopTabs>
            <MainBody>
              <Strip>
                <StripBtn>&gt;&gt;</StripBtn>
                <StripText>整个项目</StripText>
              </Strip>
              <Content>
                <GridFrame>
                  <GridClip>
                    <Sheet>
                      <colgroup>{groupCols.map((w, i) => <col key={i} width={w} />)}</colgroup>
                      <thead>
                        <SheetHeadRow>
                          {heads.map((h, i) => <SheetHead key={i} $on={i === 7}>{h}</SheetHead>)}
                        </SheetHeadRow>
                      </thead>
                      <tbody>
                        <SheetRow $tone="group" $h={23}>
                          <NumCell>B2</NumCell>
                          <CodeCell><CodeParent><FoldBox /></CodeParent></CodeCell>
                          <Cell />
                          <Cell>安装　&nbsp;强电</Cell>
                          <Cell /><Cell /><Cell /><Cell />
                          <Cell $a="right">634748.84</Cell>
                          <Cell>[通用安装···</Cell>
                          <Cell />
                        </SheetRow>
                        <SheetRow $tone="picked" $h={23}>
                          <NumCell $picked>1</NumCell>
                          <CodeCell $line><CodeParent><FoldBox />030404004001</CodeParent></CodeCell>
                          <Cell $a="center">项</Cell>
                          <Cell>低压开关柜(屏)</Cell>
                          <Cell>台</Cell>
                          <Cell>1</Cell>
                          <Cell $a="right">1</Cell>
                          <Cell $a="right" $pick>1236.84</Cell>
                          <Cell $a="right">1236.84</Cell>
                          <Cell>通用安装工程</Cell>
                          <Cell />
                        </SheetRow>
                        <SheetRow $tone="child" $h={24}>
                          <NumCell />
                          <CodeCell $line $child><CodeChild>4-107</CodeChild></CodeCell>
                          <Cell $a="center">定</Cell>
                          <Cell>低压成套配电柜</Cell>
                          <Cell>台</Cell>
                          <Cell>QDL</Cell>
                          <Cell $a="right">1</Cell>
                          <Cell $a="right">1236.84</Cell>
                          <Cell $a="right">1236.84</Cell>
                          <Cell>通用安装工程</Cell>
                          <Cell />
                        </SheetRow>
                        {items.map((it) => (
                          <React.Fragment key={it.n}>
                            <SheetRow $tone="parent" $h={23}>
                              <NumCell>{it.n}</NumCell>
                              <CodeCell $line><CodeParent><FoldBox />{it.code}</CodeParent></CodeCell>
                              <Cell $a="center">项</Cell>
                              <Cell>{it.name}</Cell>
                              <Cell>台</Cell>
                              <Cell>{it.expr}</Cell>
                              <Cell $a="right">{it.qty}</Cell>
                              <Cell $a="right">{it.price}</Cell>
                              <Cell $a="right">{it.total}</Cell>
                              <Cell>通用安装工程</Cell>
                              <Cell />
                            </SheetRow>
                            <SheetRow $tone="child" $h={61}>
                              <NumCell />
                              <CodeCell $line $child><CodeChild>{it.sub}</CodeChild></CodeCell>
                              <Cell $a="center">借</Cell>
                              <Cell>{setName(it.size)}</Cell>
                              <Cell>台</Cell>
                              <Cell>QDL</Cell>
                              <Cell $a="right">{it.qty}</Cell>
                              <Cell $a="right">{it.price}</Cell>
                              <Cell $a="right">{it.total}</Cell>
                              <Cell>房屋修缮工程</Cell>
                              <Cell>{note}</Cell>
                            </SheetRow>
                          </React.Fragment>
                        ))}
                      </tbody>
                    </Sheet>
                  </GridClip>
                  <VScroll><VArrow /><VThumb /><VArrow $down /></VScroll>
                  <Mark />
                </GridFrame>
                <HScroll>
                  <HArrow $left />
                  <HTrack><HThumb /></HTrack>
                  <HArrow />
                </HScroll>
                <Lower>
                  <LowerTabs>
                    {[["工料机显示", 90], ["单价构成", 78], ["标准换算", 78], ["换算信息", 78], ["安装费用", 78], ["特征及内容", 90], ["组价方案", 78], ["工程量明细", 90], ["反查图形工程量", 114], ["说明信息", 78]].map(([t, w], i) => (
                      <LowerTab key={t as string} $w={w as number} $on={i === 6}>{t}</LowerTab>
                    ))}
                  </LowerTabs>
                  <SubRow>
                    <SubTab $on>个人数据</SubTab>
                    <SubTab>行业数据</SubTab>
                    <WarnDot>!</WarnDot>
                    <WarnText>数据来源：行业数据来源广联达指标网</WarnText>
                  </SubRow>
                  <PanelRow>
                    <LoginPanel>
                      <LoginText>登录后查看更多数据哦~</LoginText>
                      <LoginBtn>立即登录</LoginBtn>
                    </LoginPanel>
                    <Splitter><SplitHandle /></Splitter>
                    <PlanPanel>
                      <QuoteBox>
                        <QuoteOpen viewBox="0 0 34 24">
                          <path d="M5 0h8l-3 11h3v13H0V11z" />
                          <path d="M26 0h8l-3 11h3v13H21V11z" />
                        </QuoteOpen>
                        <QuoteClose viewBox="0 0 34 24">
                          <path d="M0 0h13v13l-5 11H3l3-11H0z" />
                          <path d="M21 0h13v13l-5 11h-5l3-11h-6z" />
                        </QuoteClose>
                        <QuoteTitle>组价方案</QuoteTitle>
                        <QuoteBody>根据工程中的清单去查找数据库中的相似清单，筛选出清单最常用的组价方案。</QuoteBody>
                      </QuoteBox>
                    </PlanPanel>
                  </PanelRow>
                </Lower>
              </Content>
            </MainBody>
          </MainCol>
        </AppBody>
      </AppWindow>

      <Ime>
        <ImeBar />
        <ImeLogo viewBox="0 0 32 30">
          <defs>
            <linearGradient id="sg" x1="0" y1="0" x2="1" y2="1">
              <stop offset="0" stopColor="#f86a2b" />
              <stop offset="1" stopColor="#ef4a14" />
            </linearGradient>
          </defs>
          <rect x="3" y="2.5" width="25" height="25" rx="3" fill="url(#sg)" transform="rotate(-12 16 15)" />
          <path d="M23 9c-5-1.500-12-.5-12 3s10 2.500 10 6-7 4-12 2.500" fill="none" stroke="#fff" strokeWidth="3.4" strokeLinecap="round" />
        </ImeLogo>
        <ImeItems>
          <ImeGlyph>中</ImeGlyph>
          <ImeGlyph>°,</ImeGlyph>
          <svg width="16" height="20" viewBox="0 0 16 20" fill="none" stroke="#1677d2" strokeWidth="1.8">
            <rect x="5" y="1" width="6" height="11" rx="3" fill="#1677d2" />
            <path d="M2 9c0 8 12 8 12 0M8 15v4" />
          </svg>
          <svg width="16" height="13" viewBox="0 0 16 13">
            <rect x="0.800" y="0.800" width="14.400" height="11.400" rx="1.500" fill="none" stroke="#1677d2" strokeWidth="1.600" />
            <path d="M3 4h10M3 6.500h10M4 9.300h8" stroke="#1677d2" strokeWidth="1.600" strokeDasharray="1.600 .6" />
          </svg>
          <svg width="16" height="18" viewBox="0 0 16 18">
            <defs>
              <linearGradient id="tee" x1="0" y1="0" x2="1" y2="1">
                <stop offset="0" stopColor="#f0706a" />
                <stop offset="1" stopColor="#5a7cf0" />
              </linearGradient>
            </defs>
            <path d="M1 5l4-2h5l4 2-1 4-2-1v9H4V8L2 9z" fill="url(#tee)" />
            <circle cx="13" cy="3" r="2.700" fill="#f4512c" />
          </svg>
          <svg width="16" height="14" viewBox="0 0 16 14">
            <path d="M4 1h8c2.500 0 4 2 4 5s-1 7-3 7-2-3-5-3-3 3-5 3-3-4-3-7 1.500-5 4-5z" fill="#1677d2" />
            <path d="M3.500 5.500h3M5 4v3" stroke="#fff" strokeWidth="1.200" />
            <circle cx="11" cy="5.500" r="1.300" fill="#fff" />
          </svg>
          <svg width="15" height="15" viewBox="0 0 15 15" fill="#1677d2">
            <rect x="0" y="0" width="6.500" height="6.500" rx="1.800" />
            <rect x="8.500" y="0" width="6.500" height="6.500" rx="1.800" />
            <rect x="0" y="8.500" width="6.500" height="6.500" rx="1.800" />
            <rect x="8.500" y="8.500" width="6.500" height="6.500" rx="1.800" />
          </svg>
          <svg width="16" height="16" viewBox="0 0 16 16">
            <circle cx="8" cy="8" r="5" fill="none" stroke="#1677d2" strokeWidth="3" strokeDasharray="3 1.500" />
          </svg>
        </ImeItems>
      </Ime>
    </Screen>
  );
}
